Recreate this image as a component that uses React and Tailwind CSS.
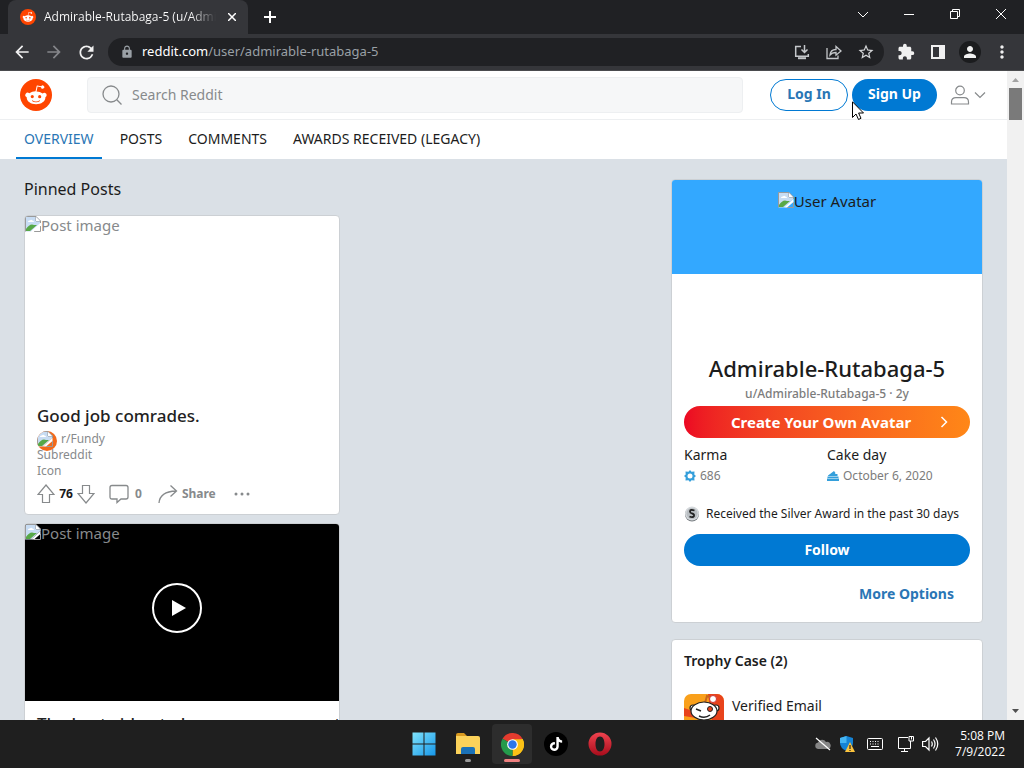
import React from "react";
import { MdArrowBack, MdArrowForward, MdRefresh, MdLock, MdStarBorder, MdExtension, MdMoreVert, MdPerson } from "react-icons/md";
import { FaTiktok } from "react-icons/fa";

const Snoo = ({ className }) => (
  <svg viewBox="0 0 20 20" className={className} aria-hidden="true">
    <circle fill="#FF4500" cx="10" cy="10" r="10" />
    <path
      fill="#FFF"
      d="M16.67,10A1.46,1.46,0,0,0,14.2,9a7.12,7.12,0,0,0-3.85-1.23L11,4.65,13.14,5.1a1,1,0,1,0,.13-0.61L10.82,4a0.31,0.31,0,0,0-.37.24L9.71,7.71a7.14,7.14,0,0,0-3.9,1.23A1.46,1.46,0,1,0,4.2,11.33a2.87,2.87,0,0,0,0,.44c0,2.24,2.61,4.06,5.83,4.06s5.83-1.82,5.83-4.06a2.87,2.87,0,0,0,0-.44A1.46,1.46,0,0,0,16.67,10Zm-10,1a1,1,0,1,1,1,1A1,1,0,0,1,6.67,11Zm5.81,2.75a3.84,3.84,0,0,1-2.47.77,3.84,3.84,0,0,1-2.47-.77,0.27,0.27,0,0,1,.38-0.38A3.27,3.27,0,0,0,10,14a3.28,3.28,0,0,0,2.09-.61A0.27,0.27,0,1,1,12.48,13.79Zm-0.18-1.71a1,1,0,1,1,1-1A1,1,0,0,1,12.29,12.08Z"
    />
  </svg>
);

const BrokenImage = () => (
  <svg viewBox="0 0 16 16" className="w-4 h-4 shrink-0" aria-hidden="true">
    <path d="M.5 .5H11L15.500 5V7L6 15.500H.5Z" fill="#c7dcf3" />
    <path d="M1 15V13Q5 7 9 9L12 9 5 15Z" fill="#57a847" />
    <path d="M3 6q0-2 2-1.500Q6 3 7.500 4.500 9 4.500 9 6Z" fill="#fff" />
    <path d="M.5 15.500V.5H11L15.500 5V7M11 .5V5H15.500M15.500 10V15.500H9" fill="none" stroke="#9a9a9a" />
    <path d="M11 1V5H15Z" fill="#fff" />
    <path d="M15.500 7 6 15.500H9L15.500 10Z" fill="#fff" />
  </svg>
);

const TabStrip = () => (
  <div className="h-[34px] shrink-0 flex items-stretch bg-[#202124] text-white">
    <div className="flex items-center w-60 ml-2 pl-3 pr-2 rounded-t-lg bg-[#35363a]">
      <Snoo className="w-4 h-4 shrink-0" />
      <span className="ml-2 flex-1 min-w-0 overflow-hidden whitespace-nowrap font-['Open_Sans',sans-serif] text-xs bg-linear-to-r from-white from-85% to-transparent bg-clip-text text-transparent">
        Admirable-Rutabaga-5 (u/Admirable-Rutabaga-5)
      </span>
      <button aria-label="Close tab" className="ml-2 w-4 h-4 flex items-center justify-center">
        <svg viewBox="0 0 8 8" className="w-2 h-2"><path d="M0 0 8 8M8 0 0 8" stroke="#fff" strokeWidth="1.500" /></svg>
      </button>
    </div>
    <button aria-label="New tab" className="w-11 flex items-center justify-center">
      <svg viewBox="0 0 12 12" className="w-3 h-3"><path d="M6 0V12M0 6H12" stroke="#fff" strokeWidth="2" /></svg>
    </button>
    <div className="flex-1" />
    <WindowButton label="Search tabs"><path d="M1 4 6 9 11 4" /></WindowButton>
    <WindowButton label="Minimize"><path d="M1 6.500H11" /></WindowButton>
    <WindowButton label="Restore"><path d="M1.500 3.500H8.500V10.500H1.500ZM3.500 3V1.500H10.500V8.500H9" /></WindowButton>
    <WindowButton label="Close"><path d="M1 1 11 11M11 1 1 11" /></WindowButton>
  </div>
);

const WindowButton = ({ label, children }) => (
  <button aria-label={label} className="w-[46px] h-7 flex items-center justify-center">
    <svg viewBox="0 0 12 12" className="w-3 h-3" fill="none" stroke="#fff">{children}</svg>
  </button>
);

const ToolButton = ({ label, className = "text-[#f1f1f1]", children }) => (
  <button aria-label={label} className={`w-8 h-7 shrink-0 flex items-center justify-center ${className}`}>
    {children}
  </button>
);

const Toolbar = () => (
  <div className="h-[37px] shrink-0 flex items-center px-1.5 bg-[#35363a] border-b border-[#4a4b4e]">
    <ToolButton label="Back"><MdArrowBack size={20} /></ToolButton>
    <ToolButton label="Forward" className="text-[#85868a]"><MdArrowForward size={20} /></ToolButton>
    <ToolButton label="Reload"><MdRefresh size={21} /></ToolButton>
    <div className="flex-1 min-w-0 h-7 mx-1.5 pl-3 pr-0.5 flex items-center rounded-full bg-[#202124] text-[13px] text-[#9aa0a6]">
      <MdLock size={14} className="shrink-0 mr-2" />
      <p className="flex-1 truncate"><span className="text-white">reddit.com</span>/user/admirable-rutabaga-5</p>
      <ToolButton label="Install app" className="text-[#c4c7ca]">
        <svg viewBox="0 0 16 16" className="w-4 h-4" fill="none" stroke="currentColor" strokeWidth="1.500">
          <path d="M7 2.500H1.700V12.300H14.300V10M10.500 1V8M7.500 5.500 10.500 8.500 13.500 5.500" />
          <path d="M4 14.200H12" strokeWidth="2" />
        </svg>
      </ToolButton>
      <ToolButton label="Share" className="text-[#c4c7ca]">
        <svg viewBox="0 0 16 16" className="w-4 h-4" fill="none" stroke="currentColor" strokeWidth="1.300">
          <path d="M1 4V14.500H12V11.500M4 11Q4.500 5.500 10 5.500V2.500L15 7 10 11.200V8.500Q6 8.500 4 11Z" />
        </svg>
      </ToolButton>
      <ToolButton label="Bookmark" className="text-[#d4d6d8]"><MdStarBorder size={18} /></ToolButton>
    </div>
    <ToolButton label="Extensions"><MdExtension size={18} /></ToolButton>
    <ToolButton label="Side panel">
      <svg viewBox="0 0 14 14" className="w-3.5 h-3.5"><path fillRule="evenodd" fill="currentColor" d="M0 0H14V14H0ZM2 2V12H8V2Z" /></svg>
    </ToolButton>
    <ToolButton label="Profile">
      <span className="w-[22px] h-[22px] rounded-full bg-[#1b1c1e] flex items-center justify-center"><MdPerson size={18} /></span>
    </ToolButton>
    <ToolButton label="Menu"><MdMoreVert size={20} /></ToolButton>
  </div>
);

const SiteHeader = () => (
  <header className="h-[49px] shrink-0 flex items-center pl-5 pr-[21px] bg-white border-b border-[#edeff1]">
    <a href="#home" aria-label="Home"><Snoo className="w-8 h-8" /></a>
    <label className="flex-1 min-w-0 h-9 ml-[35px] mr-[27px] pl-3.5 flex items-center gap-2.5 rounded-sm border border-[#edeff1] bg-[#f6f7f8]">
      <svg viewBox="0 0 20 20" className="w-5 h-5 shrink-0" fill="none" stroke="#878a8c" strokeWidth="1.300">
        <circle cx="9" cy="9" r="8" /><path d="M14.800 14.800 19.500 19.500" />
      </svg>
      <input aria-label="Search Reddit" placeholder="Search Reddit" className="flex-1 min-w-0 bg-transparent outline-none text-sm placeholder:text-[#878a8c]" />
    </label>
    <div className="relative flex gap-1">
      <button className="w-[78px] h-8 pb-0.5 rounded-full border border-[#0079d3] text-[#2a76b5] text-sm font-bold">Log In</button>
      <button className="w-[85px] h-8 pb-0.5 rounded-full bg-[#0079d3] text-white text-sm font-bold">Sign Up</button>
      {/* Mouse pointer */}
      <svg viewBox="0 0 12 19" className="absolute left-[82px] top-[22px] w-3 h-[19px]">
        <path d="M.5 .8V16.500L4 13 6.500 18.500 9 17.300 6.600 12H11.500Z" fill="#fff" stroke="#000" />
      </svg>
    </div>
    <button aria-label="User menu" className="ml-[13px] flex items-center gap-1">
      <svg viewBox="0 0 20 20" className="w-5 h-5" fill="none" stroke="#878a8c" strokeWidth="1.200">
        <circle cx="10" cy="5.500" r="4.300" />
        <path d="M1.500 19V17Q1.500 12.700 6 12.700H14Q18.500 12.700 18.500 17V19Z" />
      </svg>
      <svg viewBox="0 0 12 12" className="w-3 h-3" fill="none" stroke="#878a8c" strokeWidth="1.200"><path d="M1 3.500 6 8.500 11 3.500" /></svg>
    </button>
  </header>
);

const tabs = ["OVERVIEW", "POSTS", "COMMENTS", "AWARDS RECEIVED (LEGACY)"];

const ProfileTabs = () => (
  <nav className="h-[39px] shrink-0 flex gap-2.5 px-4 bg-white text-sm text-[#1c1c1c]">
    {tabs.map((tab, i) => (
      <a
        key={tab}
        href={`#${i}`}
        className={`px-2 flex items-center border-b-2 ${i === 0 ? "border-[#0079d3] text-[#2a76b5]" : "border-transparent"}`}
      >
        {tab}
      </a>
    ))}
  </nav>
);

const PostCard = ({ title, dark, children }) => (
  <article className="rounded-sm border border-[#ccd0d4] bg-white overflow-hidden text-[#878a8c]">
    <div className={`relative h-[177px] flex items-start ${dark ? "bg-black" : ""}`}>
      <BrokenImage />
      <span className="text-[15px] leading-[18px]">Post image</span>
      {dark && (
        <button aria-label="Play" className="absolute top-0 left-0 right-2.5 bottom-2.5 m-auto w-[50px] h-[50px] rounded-full border-2 border-white flex items-center justify-center">
          <svg viewBox="0 0 14 16" className="w-3.5 h-4 ml-1"><path d="M0 0 14 8 0 16Z" fill="#fff" /></svg>
        </button>
      )}
    </div>
    <div className="px-3 pt-3 pb-2">
      <h3 className="text-[17px] leading-[22px] font-medium text-[#222] whitespace-nowrap">{title}</h3>
      {children}
    </div>
  </article>
);

const PostActions = () => (
  <div className="h-6 mt-[3px] flex items-center text-xs font-bold">
    <button aria-label="Upvote">
      <svg viewBox="0 0 18 20" className="w-[18px] h-5" fill="none" stroke="currentColor" strokeWidth="1.200"><path d="M9 1 17 10.500H12.500V18.500H5.500V10.500H1Z" /></svg>
    </button>
    <span className="w-[22px] text-center text-[#1a1a1b]">76</span>
    <button aria-label="Downvote">
      <svg viewBox="0 0 18 20" className="w-[18px] h-5" fill="none" stroke="currentColor" strokeWidth="1.200"><path d="M9 19 17 9.500H12.500V1.500H5.500V9.500H1Z" /></svg>
    </button>
    <button className="ml-3.5 flex items-center gap-1.5">
      <svg viewBox="0 0 20 20" className="w-5 h-5" fill="none" stroke="currentColor" strokeWidth="1.300">
        <path d="M3 1.500H17Q19 1.500 19 3.500V13Q19 15 17 15H12L8 18.500V15H3Q1 15 1 13V3.500Q1 1.500 3 1.500Z" />
      </svg>
      0
    </button>
    <button className="ml-4 flex items-center gap-1">
      <svg viewBox="0 0 20 20" className="w-5 h-5" fill="none" stroke="currentColor" strokeWidth="1.300"><path d="M1 19Q2 7.500 18 7M12.500 1.500 18.500 7 12.500 12.500" /></svg>
      Share
    </button>
    <button aria-label="More" className="ml-[18px]">
      <svg viewBox="0 0 16 4" className="w-4 h-1" fill="currentColor"><circle cx="2" cy="2" r="1.500" /><circle cx="8" cy="2" r="1.500" /><circle cx="14" cy="2" r="1.500" /></svg>
    </button>
  </div>
);

const ProfileCard = () => (
  <section className="rounded-sm border border-[#ccd0d4] bg-white overflow-hidden text-[#1c1c1c]">
    <div className="h-[94px] pt-3 flex items-start justify-center bg-[#33a8ff]">
      <BrokenImage />
      <span className="text-[15px] leading-[18px]">User Avatar</span>
    </div>
    <div className="px-3 pt-20 pb-[18px] flex flex-col">
      <h1 className="text-[22px] leading-7 font-medium text-center">Admirable-Rutabaga-5</h1>
      <p className="mt-1 text-xs leading-4 font-medium text-center text-[#7c7c7c]">u/Admirable-Rutabaga-5 · 2y</p>
      <button className="mt-1 h-8 pr-5 flex items-center rounded-full bg-linear-to-r from-[#ec0623] to-[#ff8717] text-white text-[15px] font-bold">
        <span className="flex-1 pl-5">Create Your Own Avatar</span>
        <svg viewBox="0 0 12 12" className="w-3 h-3" fill="none" stroke="#fff" strokeWidth="1.500"><path d="M3.500 1 8.500 6 3.500 11" /></svg>
      </button>
      <dl className="mt-[7px] grid grid-cols-2 text-sm">
        <div>
          <dt className="leading-5">Karma</dt>
          <dd className="mt-[3px] flex items-center gap-1 text-xs text-[#7c7c7c]">
            <svg viewBox="0 0 12 12" className="w-3 h-3" fill="#349fdb">
              <path fillRule="evenodd" d="M6 0 7.500 1.700 10.500 1.500 10.300 4.500 12 6 10.300 7.500 10.500 10.500 7.500 10.300 6 12 4.500 10.300 1.500 10.500 1.700 7.500 0 6 1.700 4.500 1.500 1.500 4.500 1.700ZM6 3.500A2.500 2.500 0 1 0 6 8.500 2.500 2.500 0 1 0 6 3.500Z" />
            </svg>
            686
          </dd>
        </div>
        <div>
          <dt className="leading-5">Cake day</dt>
          <dd className="mt-[3px] flex items-center gap-1 text-xs text-[#7c7c7c]">
            <svg viewBox="0 0 12 12" className="w-3 h-3" fill="#349fdb"><path d="M1 5.500 7 1 8.500 3 8 4H10.500V6H1ZM.5 6.500H11.500V8H.5ZM0 8.500H12V11H0Z" /></svg>
            October 6, 2020
          </dd>
        </div>
      </dl>
      <div className="mt-[22px] flex items-center gap-1.5 text-xs leading-4">
        <svg viewBox="0 0 16 16" className="w-4 h-4">
          <circle cx="8" cy="8.500" r="7" fill="#777c80" /><circle cx="8" cy="7.500" r="7" fill="#d5d9dc" />
          <circle cx="8" cy="7.500" r="5.500" fill="#b9bec2" />
          <path d="M10.500 4.500Q6 3 6 5.500 6 7 8 7.500 10.500 8 10 10 9 12 5.500 10.500" fill="none" stroke="#222" strokeWidth="1.800" />
        </svg>
        Received the Silver Award in the past 30 days
      </div>
      <button className="mt-3 h-8 rounded-full bg-[#0079d3] text-white text-sm font-bold">Follow</button>
      <button className="mt-[18px] mr-4 self-end text-sm font-bold text-[#2a76b5]">More Options</button>
    </div>
  </section>
);

const VerifiedBadge = () => (
  <svg viewBox="0 0 40 40" className="w-10 h-10" aria-hidden="true">
    <defs><clipPath id="badge"><rect width="40" height="40" rx="7" /></clipPath></defs>
    <g clipPath="url(#badge)">
      <rect width="40" height="40" fill="#f9a01b" />
      <path d="M24 0H40V28H28ZM0 14 12 18V24L0 22Z" fill="#e8431c" />
      <path d="M21 9 23 2 29 4" fill="none" stroke="#c9661c" strokeWidth="2" />
      <circle cx="29" cy="5" r="3.500" fill="#fff" stroke="#c33" />
      <g fill="#fff" stroke="#222" strokeWidth="1.200">
        <circle cx="9" cy="14" r="3" /><circle cx="32" cy="14" r="3" />
        <path d="M10 40Q10 26 20 26T31 40Z" />
        <ellipse cx="20" cy="17" rx="13" ry="9" />
      </g>
      <path d="M12 15 17 17M15 22Q21 25 26 21" fill="none" stroke="#222" strokeWidth="1.500" />
      <circle cx="26" cy="15" r="2.500" fill="#e8431c" stroke="#222" />
    </g>
  </svg>
);

const Scrollbar = () => (
  <div className="w-[17px] shrink-0 flex flex-col items-center bg-[#f1f1f1]" aria-hidden="true">
    <svg viewBox="0 0 17 17" className="w-[17px] h-[17px]"><path d="M5 11 8.500 7 12 11Z" fill="#a3a3a3" /></svg>
    <div className="w-[13px] h-8 bg-[#7a7a7a]" />
    <svg viewBox="0 0 17 17" className="w-[17px] h-[17px] mt-auto"><path d="M5 6 8.500 10 12 6Z" fill="#505050" /></svg>
  </div>
);

const TaskButton = ({ label, mark, active, children }) => (
  <button aria-label={label} className={`w-10 h-10 flex flex-col items-center justify-center relative rounded ${active ? "bg-[#2d2d2d]" : ""}`}>
    {children}
    {mark && <span className={`absolute bottom-0.5 h-[3px] rounded-full ${active ? "w-4 bg-[#f08080]" : "w-1.5 bg-[#9b9b9b]"}`} />}
  </button>
);

const Taskbar = () => (
  <footer className="h-12 shrink-0 grid grid-cols-[1fr_auto_1fr] items-center bg-[#1f1f1f] text-white">
    <div />
    <div className="flex gap-1">
      <TaskButton label="Start">
        <svg viewBox="0 0 24 24" className="w-6 h-6">
          <defs><linearGradient id="win" x1="0" y1="0" x2="1" y2="1"><stop stopColor="#7fe3fb" /><stop offset="1" stopColor="#1697ea" /></linearGradient></defs>
          <path d="M.5 .5H11.500V11.500H.5ZM12.500 .5H23.500V11.500H12.500ZM.5 12.500H11.500V23.500H.5ZM12.500 12.500H23.500V23.500H12.500Z" fill="url(#win)" />
        </svg>
      </TaskButton>
      <TaskButton label="File Explorer" mark>
        <svg viewBox="0 0 24 24" className="w-6 h-6">
          <path d="M0 3Q0 1 2 1H8L11 4H0Z" fill="#d99a20" />
          <path d="M0 4H22Q24 4 24 6V22H0Z" fill="#fbd25a" />
          <path d="M5 22V17Q5 15 7 15H17Q19 15 19 17V22Z" fill="#1b72b8" />
        </svg>
      </TaskButton>
      <TaskButton label="Chrome" mark active>
        <svg viewBox="0 0 24 24" className="w-[23px] h-[23px]">
          <path d="M12 12 1.600 6A12 12 0 0 1 22.400 6Z" fill="#e33b2e" />
          <path d="M12 12 22.400 6A12 12 0 0 1 12 24Z" fill="#fbc116" />
          <path d="M12 12V24A12 12 0 0 1 1.600 6Z" fill="#249a4b" />
          <path d="M12 6.500H22.600A12 12 0 0 1 12 24L17 14.500Z" fill="#fbc116" />
          <circle cx="12" cy="12" r="5.600" fill="#fff" /><circle cx="12" cy="12" r="4.400" fill="#2b76e8" />
        </svg>
      </TaskButton>
      <TaskButton label="TikTok">
        <span className="w-6 h-6 rounded-full bg-black flex items-center justify-center"><FaTiktok size={14} /></span>
      </TaskButton>
      <TaskButton label="Opera">
        <svg viewBox="0 0 24 24" className="w-6 h-6">
          <defs><linearGradient id="opera" x1="0" y1="0" x2="0" y2="1"><stop stopColor="#f0434f" /><stop offset="1" stopColor="#a80d1c" /></linearGradient></defs>
          <path fillRule="evenodd" d="M12 .5A11.500 11.500 0 1 0 12 23.500 11.500 11.500 0 1 0 12 .5ZM12 4.500C15 4.500 16.500 8 16.500 12S15 19.500 12 19.500 7.500 16 7.500 12 9 4.500 12 4.500Z" fill="url(#opera)" />
        </svg>
      </TaskButton>
    </div>
    <div className="flex items-center justify-end pr-[19px]">
      <svg viewBox="0 0 16 16" className="w-4 h-4 mr-2">
        <path d="M3 13A3.300 3.300 0 0 1 3 6.500 4.500 4.500 0 0 1 11 6 3.500 3.500 0 0 1 13 13Z" fill="#858585" /><path d="M1 2 15 14" stroke="#fff" strokeWidth="1.200" />
      </svg>
      <svg viewBox="0 0 16 16" className="w-4 h-4 mr-3">
        <path d="M7.500 0 14 2V7Q14 12 7.500 15 1 12 1 7V2Z" fill="#1583d5" /><path d="M7.500 0 1 2V7H7.500Z" fill="#45b5f2" />
        <path d="M11 6 16 16H6Z" fill="#fcc33c" /><path d="M11 9V13M11 14V15" stroke="#222" strokeWidth="1.200" />
      </svg>
      <svg viewBox="0 0 16 12" className="w-4 h-3 mr-[15px]" fill="none" stroke="#fff">
        <rect x=".5" y=".5" width="15" height="11" rx="1" /><path d="M3 3.500H13M3 6H13" strokeDasharray="1 1.500" /><path d="M4 8.500H12" />
      </svg>
      <svg viewBox="0 0 16 16" className="w-4 h-4 mr-2" fill="none" stroke="#fff">
        <path d="M10 1.500H.5V12.500H12.500V7M6.500 12.500V15.500M3 15.500H10M12.500 7V5M11 .5H15.500V5H11ZM13.500 1V3.500" />
      </svg>
      <svg viewBox="0 0 17 16" className="w-[17px] h-4 mr-4" fill="none" stroke="#fff" strokeWidth="1.200">
        <path d="M.6 5.500H3.500L7 2V14L3.500 10.500H.6ZM9.500 5.500Q11 8 9.500 10.500M11.500 3.500Q14.500 8 11.500 12.500M13.500 1.500Q18 8 13.500 14.500" />
      </svg>
      <div className="text-right font-['Open_Sans',sans-serif] text-xs leading-4"><p>5:08 PM</p><p>7/9/2022</p></div>
    </div>
  </footer>
);

export default function App() {
  return (
    <div className="h-screen flex flex-col overflow-hidden font-['Noto_Sans',sans-serif]">
      <TabStrip />
      <Toolbar />
      <div className="flex-1 min-h-0 flex">
        <div className="flex-1 min-w-0 flex flex-col">
          <SiteHeader />
          <ProfileTabs />
          <main className="flex-1 min-h-0 overflow-hidden flex items-start justify-between px-6 bg-[#dae0e6]">
            <div className="w-[316px] pt-5">
              <h2 className="mb-4 text-base leading-5 text-[#1c1c1c]">Pinned Posts</h2>
              <div className="flex flex-col gap-2">
                <PostCard title="Good job comrades.">
                  <div className="mt-1 text-xs leading-4">
                    <div className="h-4 flex items-start gap-1">
                      <span className="w-5 h-5 shrink-0 rounded-full overflow-hidden bg-[#f26a1b]"><BrokenImage /></span>
                      <a href="#fundy">r/Fundy</a>
                    </div>
                    <p>Subreddit</p>
                    <p>Icon</p>
                  </div>
                  <PostActions />
                </PostCard>
                <PostCard title="The best video to have ever come out" dark />
              </div>
            </div>
            <aside className="w-[312px] pt-5 flex flex-col gap-4">
              <ProfileCard />
              <section className="rounded-sm border border-[#ccd0d4] bg-white p-3 text-sm text-[#1c1c1c]">
                <h2 className="leading-[18px] font-semibold">Trophy Case (2)</h2>
                <div className="mt-6 flex items-start gap-2">
                  <VerifiedBadge />
                  <p className="leading-6">Verified Email</p>
                </div>
              </section>
            </aside>
          </main>
        </div>
        <Scrollbar />
      </div>
      <Taskbar />
    </div>
  );
}
